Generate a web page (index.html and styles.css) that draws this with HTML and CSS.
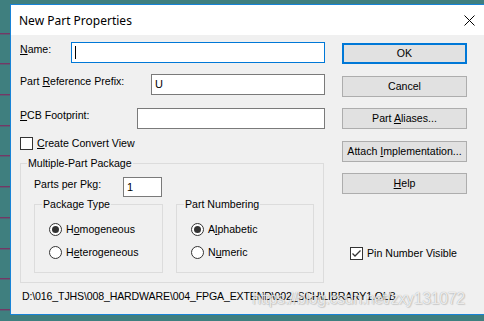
FILE: index.html
```html
<!DOCTYPE html>
<html lang="en">
<head>
  <meta charset="UTF-8" />
  <title>New Part Properties</title>
  <link rel="stylesheet" href="styles.css">
</head>
<body>
  <div class="desktop-edge"></div>

  <div class="dialog">
    <div class="titlebar">
      <span class="title">New Part Properties</span>
      <svg class="close" width="11" height="11" viewBox="0 0 11 11">
        <path d="M0.5 0.5 L10.5 10.5 M10.5 0.5 L0.5 10.5" stroke="#000" stroke-width="1" fill="none" />
      </svg>
    </div>

    <div class="content">
      <div class="main">
        <div class="left-col">
          <div class="field-row">
            <span class="label"><u>N</u>ame:</span>
            <div class="input input-name focused"><span class="caret"></span></div>
          </div>
          <div class="field-row row-prefix">
            <span class="label">Part <u>R</u>eference Prefix:</span>
            <div class="input input-prefix">U</div>
          </div>
          <div class="field-row row-pcb">
            <span class="label"><u>P</u>CB Footprint:</span>
            <div class="input input-pcb"></div>
          </div>
          <label class="check-row row-convert">
            <span class="checkbox"></span>
            <span><u>C</u>reate Convert View</span>
          </label>

          <fieldset class="group group-multi">
            <legend>Multiple-Part Package</legend>
            <div class="group-body">
              <div class="pkg-row">
                <span class="label">Parts per Pkg:</span>
                <div class="input input-pkg">1</div>
              </div>
              <div class="subgroups">
                <fieldset class="group sub sub-type">
                  <legend>Package Type</legend>
                  <div class="radio-list">
                    <label class="radio-row"><span class="radio checked"></span><span>H<u>o</u>mogeneous</span></label>
                    <label class="radio-row"><span class="radio"></span><span>H<u>e</u>terogeneous</span></label>
                  </div>
                </fieldset>
                <fieldset class="group sub sub-num">
                  <legend>Part Numbering</legend>
                  <div class="radio-list">
                    <label class="radio-row"><span class="radio checked"></span><span>A<u>l</u>phabetic</span></label>
                    <label class="radio-row"><span class="radio"></span><span>N<u>u</u>meric</span></label>
                  </div>
                </fieldset>
              </div>
            </div>
          </fieldset>
        </div>

        <div class="right-col">
          <div class="buttons">
            <button class="btn default">OK</button>
            <button class="btn">Cancel</button>
            <button class="btn">Part <u>A</u>liases...</button>
            <button class="btn">Attach <u>I</u>mplementation...</button>
            <button class="btn"><u>H</u>elp</button>
          </div>
          <label class="check-row row-pin">
            <span class="checkbox checked">
              <svg width="11" height="11" viewBox="0 0 11 11">
                <path d="M1.5 5.5 L4 8 L9.5 2.5" stroke="#333" stroke-width="1.3" fill="none" />
              </svg>
            </span>
            <span>Pin Number Visible</span>
          </label>
        </div>
      </div>

      <div class="path">D:\016_TJHS\008_HARDWARE\004_FPGA_EXTEND\002_SCH\LIBRARY1.OLB</div>
      <div class="watermark">https://blog.csdn.net/zxy131072</div>
    </div>
  </div>
</body>
</html>
```

FILE: styles.css
```css
:root {
  --desk: #3f7f7f;
  --desk-line: #8a1a5c;
  --frame: #1883d7;
  --face: #f0f0f0;
  --group-line: #dcdcdc;
  --input-border: #7a7a7a;
  --focus: #0078d7;
  --btn-bg: #e1e1e1;
  --btn-border: #adadad;
}

html, body {
  margin: 0;
  width: 484px;
  height: 321px;
  overflow: hidden;
}

body {
  display: flex;
  background-color: var(--desk);
  font-family: "Liberation Sans", Arial, sans-serif;
  font-size: 10.6px;
  color: #000;
}

.desktop-edge {
  width: 10px;
  flex: none;
  background-image: repeating-linear-gradient(to bottom,
    transparent 0, transparent 29.7px, var(--desk-line) 29.7px, var(--desk-line) 30.7px);
  background-position: 0 3.3px;
}

.dialog {
  position: relative;
  box-sizing: border-box;
  width: 474px;
  height: 311px;
  margin-top: 4px;
  border: 1px solid var(--frame);
  border-right: none;
  display: flex;
  flex-direction: column;
}

.titlebar {
  height: 30px;
  flex: none;
  background: #fff;
  display: flex;
  align-items: center;
  justify-content: space-between;
  padding: 0 9px 0 8px;
}

.title {
  font-family: "Noto Sans", sans-serif;
  font-size: 12px;
  padding-top: 1px;
}

.close {
  display: block;
  margin-top: 1px;
}

.content {
  flex: 1;
  background: var(--face);
  padding: 7px 0 0 9px;
  position: relative;
  overflow: hidden;
}

.main {
  display: flex;
  gap: 17px;
}

.left-col {
  width: 305px;
  display: flex;
  flex-direction: column;
}

.label {
  line-height: 13px;
  padding-top: 1px;
}

.field-row {
  display: flex;
  justify-content: space-between;
  align-items: flex-start;
}

.row-prefix { margin-top: 11px; }
.row-pcb { margin-top: 13px; }

.input {
  box-sizing: border-box;
  height: 21px;
  background: #fff;
  border: 1px solid var(--input-border);
  padding: 3px 0 0 3px;
  line-height: 13px;
  font-size: 11px;
}

.input.focused { border-color: var(--focus); }
.input-name { width: 254px; }
.input-prefix { width: 174px; }
.input-pcb { width: 188px; }

.caret {
  display: block;
  width: 1px;
  height: 13px;
  background: #000;
}

.check-row {
  display: flex;
  align-items: center;
  gap: 4px;
  line-height: 13px;
}

.row-convert { margin-top: 8px; }

.checkbox {
  box-sizing: border-box;
  width: 13px;
  height: 13px;
  border: 1px solid #333;
  background: #fff;
  display: flex;
  align-items: center;
  justify-content: center;
}

.checkbox svg { display: block; }

/* group boxes */
.group {
  margin: 0;
  padding: 0;
  border: 1px solid var(--group-line);
  min-inline-size: 0;
}

.group legend {
  padding: 0 1px;
  margin-left: 6px;
  line-height: 13px;
}

.group-multi {
  margin-top: 7px;
  width: 304px;
  box-sizing: border-box;
}

.group-body {
  padding: 0 9px 9px 13px;
}

.pkg-row {
  display: flex;
  align-items: flex-start;
  justify-content: space-between;
  width: 128px;
  margin-top: 7px;
}

.input-pkg {
  width: 39px;
  height: 20px;
}

.subgroups {
  display: flex;
  gap: 13px;
  margin-top: 1px;
}

.sub {
  box-sizing: border-box;
  height: 75px;
}

.sub legend { margin-left: 7px; }
.sub-type { width: 129px; }
.sub-num { width: 138px; }

.radio-list {
  display: flex;
  flex-direction: column;
  gap: 10px;
  padding: 12px 0 0 14px;
}

.radio-row {
  display: flex;
  align-items: center;
  gap: 4px;
  line-height: 13px;
}

.radio {
  box-sizing: border-box;
  width: 13px;
  height: 13px;
  border: 1px solid #333;
  border-radius: 50%;
  background: #fff;
  display: flex;
  align-items: center;
  justify-content: center;
}

.radio.checked::after {
  content: "";
  width: 7px;
  height: 7px;
  border-radius: 50%;
  background: #333;
}

/* right column */
.right-col {
  width: 125px;
  padding-top: 1px;
}

.buttons {
  display: flex;
  flex-direction: column;
  gap: 11.5px;
}

.btn {
  box-sizing: border-box;
  height: 21px;
  width: 125px;
  margin: 0;
  padding: 0;
  background: var(--btn-bg);
  border: 1px solid var(--btn-border);
  font: inherit;
  color: #000;
  line-height: 13px;
}

.btn.default {
  border: 2px solid var(--focus);
}

.row-pin {
  margin-top: 53px;
  padding-left: 8px;
}

.path {
  margin-top: 7px;
  padding-left: 2px;
  line-height: 13px;
  letter-spacing: -0.15px;
}

.watermark {
  position: absolute;
  left: 241px;
  top: 255px;
  font-size: 16px;
  letter-spacing: -0.4px;
  color: rgba(255, 255, 255, 0.8);
  text-shadow: 0 0 1px rgba(0, 0, 0, 0.35), 1px 1px 1px rgba(0, 0, 0, 0.12);
  white-space: nowrap;
}
```
